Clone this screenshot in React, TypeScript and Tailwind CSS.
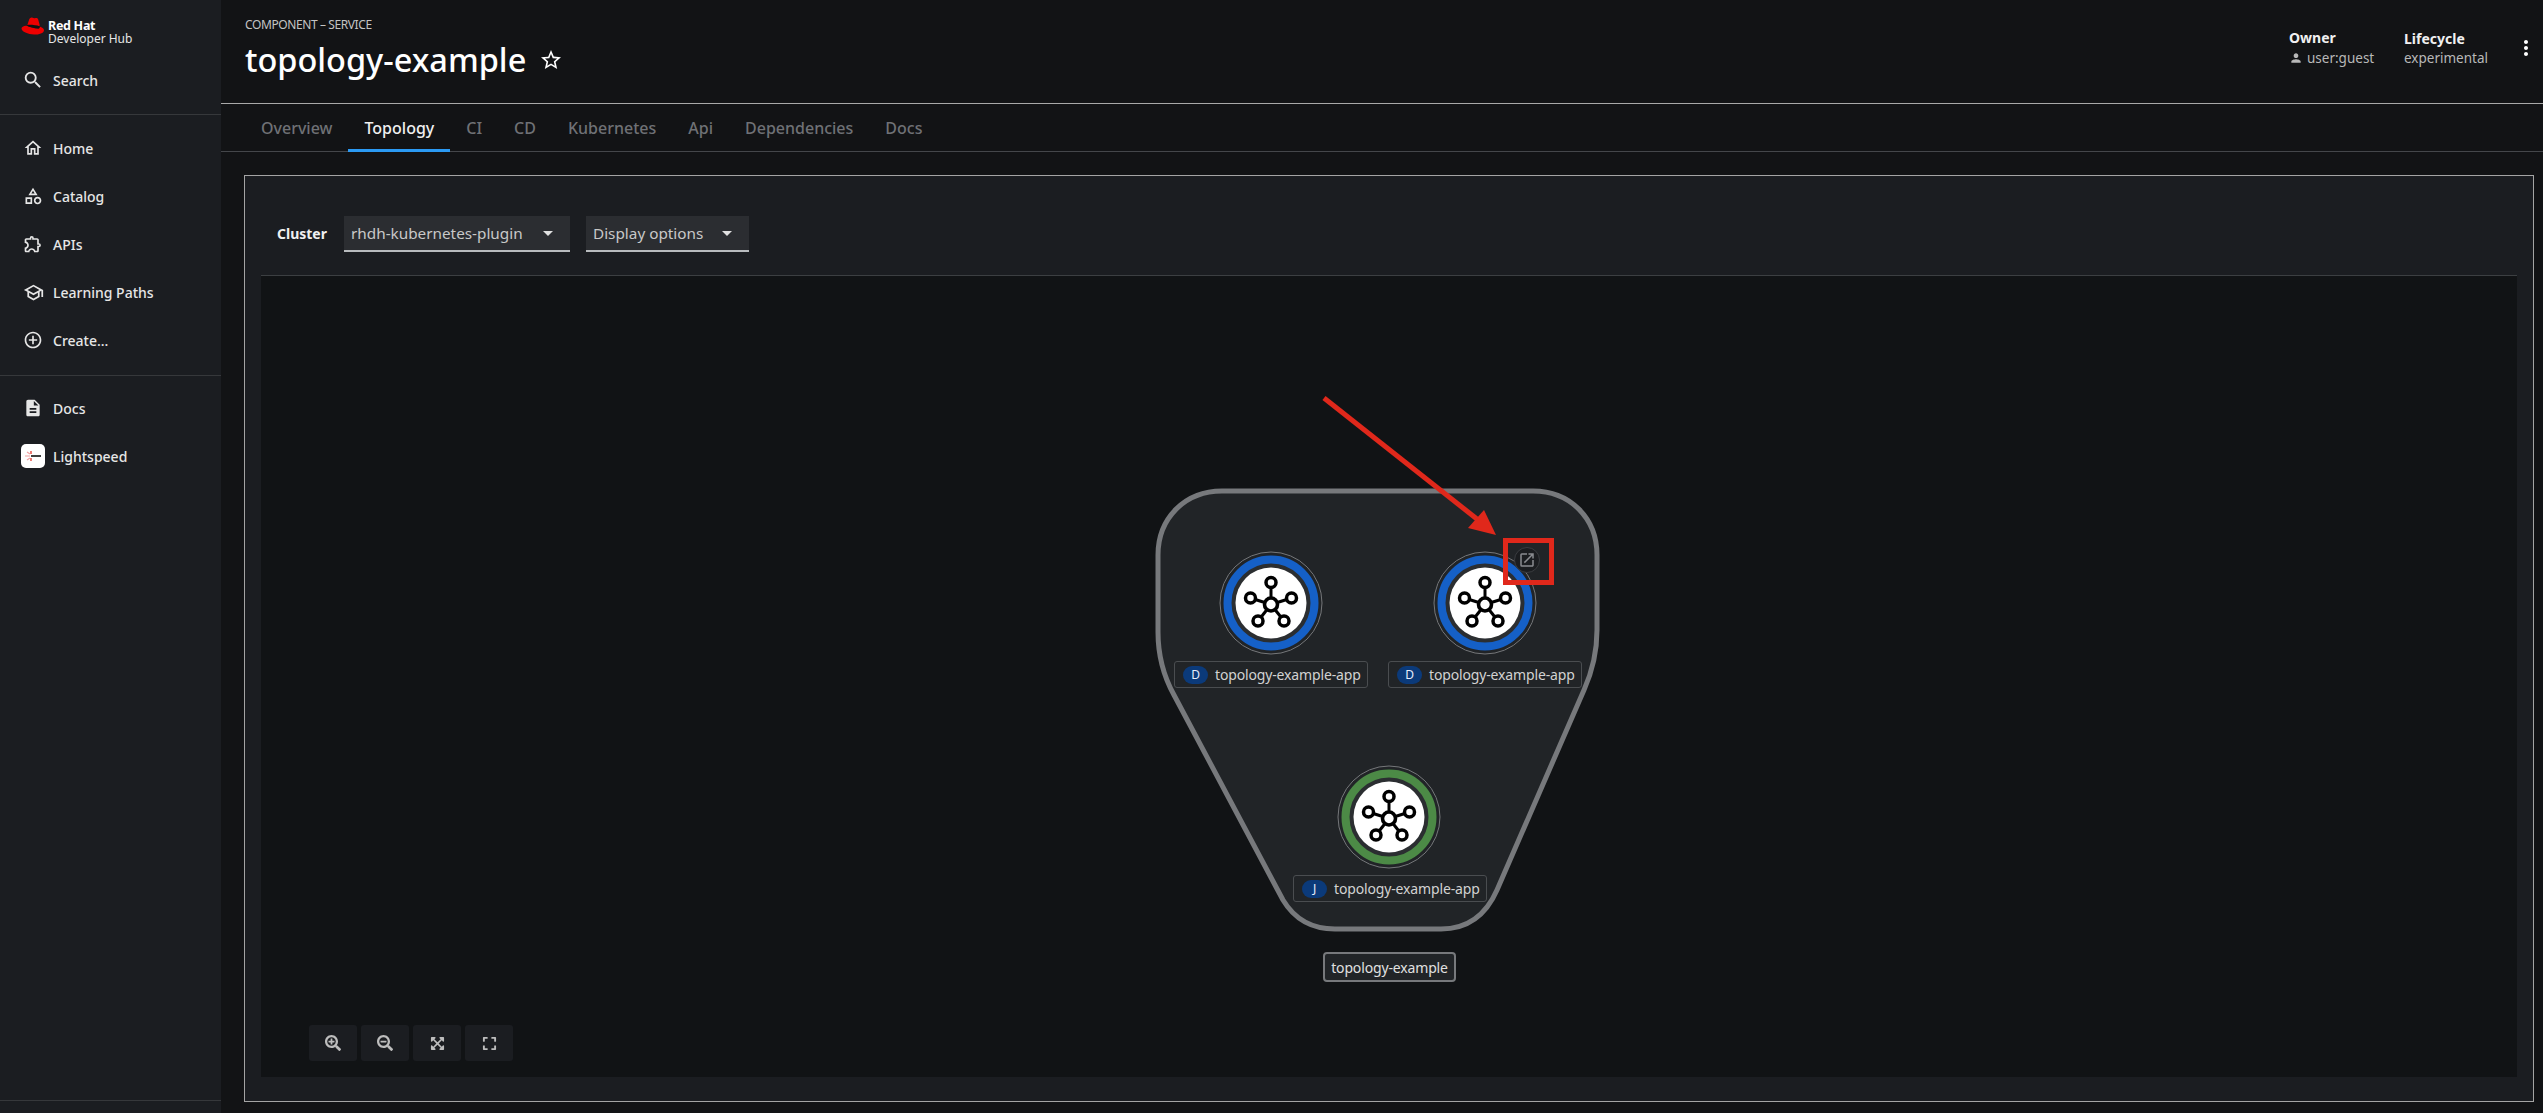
import React from 'react';
import {
  MdSearch,
  MdOutlineHome,
  MdOutlineCategory,
  MdOutlineExtension,
  MdOutlineSchool,
  MdAddCircleOutline,
  MdDescription,
  MdStarBorder,
  MdPerson,
  MdMoreVert,
  MdArrowDropDown,
  MdOutlineOpenInNew,
} from 'react-icons/md';
import { FaSearchPlus, FaSearchMinus, FaExpandArrowsAlt, FaExpand } from 'react-icons/fa';

const tabs = ['Overview', 'Topology', 'CI', 'CD', 'Kubernetes', 'Api', 'Dependencies', 'Docs'];

const NavItem: React.FC<{ icon: React.ReactNode; label: string }> = ({ icon, label }) => (
  <div className="flex h-12 items-center text-[14px] font-medium text-[#e6e6e6]">
    <div className="flex w-[53px] shrink-0 justify-center pl-[13px]">{icon}</div>
    <span>{label}</span>
  </div>
);

const LightspeedIcon = () => (
  <div className="flex h-6 w-6 items-center justify-center rounded-[5px] bg-white">
    <svg width="18" height="14" viewBox="0 0 18 14">
      <path d="M1 7h5M3 3l3 2M3 11l3-2" stroke="#f2a0a0" strokeWidth="1.2" />
      <path d="M7 2v3M7 9v3" stroke="#e0281b" strokeWidth="1.2" />
      <path d="M7 7h10" stroke="#111" strokeWidth="1.6" />
    </svg>
  </div>
);

const Sidebar = () => (
  <aside className="flex h-full w-[221px] shrink-0 flex-col bg-[#1b1d21]">
    <div className="flex h-[56px] items-start pl-[21px] pt-[16px]">
      <svg width="24" height="19" viewBox="0 0 24 19" className="mt-px">
        <path d="M6 9 8 3c.4-1.6 1.6-2.6 3-2.4 1 .2 2 .8 3 .6 1.2-.2 2.6-.4 3.2 1.2l1.4 5.4c.2 1 0 1.2-1 1.2-4 0-8-1-11.6 0z" fill="#e00" />
        <path d="M5 8.800C2.500 9 .5 10 .5 11.600 .5 14.500 7 17.600 13 17.600c5 0 10-1.400 10-4.400 0-1.800-2-3-4.400-3.800.2 1.600-.4 2-1.600 2-3.600 0-8.600-1.200-11.200-2.600z" fill="#e00" />
        <path d="M5.600 8.500c3 1.800 8.600 3 12 2.900.8-.1 1.200-.8 1-2.100-4-1.300-9-1.800-12.500-1.400z" fill="#111" />
      </svg>
      <div className="ml-[3px] mt-[3px] text-white">
        <div className="text-[12.500px] font-bold leading-[13px] tracking-[-0.3px]">Red Hat</div>
        <div className="text-[12px] leading-[14px] text-[#e6e6e6]">Developer Hub</div>
      </div>
    </div>
    <div className="h-[59px] border-b border-[#36383b] pt-0">
      <NavItem icon={<MdSearch size={22} />} label="Search" />
    </div>
    <div className="h-[261px] border-b border-[#36383b] pt-[9px]">
      <NavItem icon={<MdOutlineHome size={20} />} label="Home" />
      <NavItem icon={<MdOutlineCategory size={20} />} label="Catalog" />
      <NavItem icon={<MdOutlineExtension size={20} />} label="APIs" />
      <NavItem icon={<MdOutlineSchool size={21} />} label="Learning Paths" />
      <NavItem icon={<MdAddCircleOutline size={20} />} label="Create..." />
    </div>
    <div className="flex-1 pt-[8px]">
      <NavItem icon={<MdDescription size={20} />} label="Docs" />
      <NavItem icon={<LightspeedIcon />} label="Lightspeed" />
    </div>
    <div className="h-[13px] border-t border-[#36383b]" />
  </aside>
);

const Header = () => (
  <header className="flex h-[104px] shrink-0 items-start justify-between border-b border-[#a9a9a9] pl-[24px] pr-[5px]">
    <div>
      <div className="mt-[17px] text-[12px] leading-[16px] tracking-[-0.4px] text-[#c4c4c4]">COMPONENT – SERVICE</div>
      <div className="mt-[7px] flex items-center">
        <h1 className="text-[32.500px] font-medium leading-[40px] text-white">topology-example</h1>
        <MdStarBorder size={24} className="ml-[13px] text-white" />
      </div>
    </div>
    <div className="flex items-start">
      <div className="mt-[29px] w-[115px]">
        <div className="text-[14px] font-bold leading-[18px] text-[#f0f0f0]">Owner</div>
        <div className="mt-[1px] flex items-center text-[13.500px] leading-[20px] text-[#b8b8b8]">
          <MdPerson size={14} className="mr-[4px]" />
          user:guest
        </div>
      </div>
      <div className="mt-[30px] w-[110px]">
        <div className="text-[14px] font-bold leading-[18px] text-[#f0f0f0]">Lifecycle</div>
        <div className="text-[13.500px] leading-[20px] text-[#b8b8b8]">experimental</div>
      </div>
      <MdMoreVert size={24} className="mt-[36px] text-white" />
    </div>
  </header>
);

const Tabs = () => (
  <nav className="flex h-[48px] shrink-0 border-b border-[#44464a] pl-[24px]">
    {tabs.map((t) => (
      <div
        key={t}
        className={
          t === 'Topology'
            ? 'flex h-[48px] items-center border-b-[3px] border-[#2b9af3] px-[16px] pt-[3px] text-[16px] font-medium text-[#f0f0f0]'
            : 'flex h-[48px] items-center px-[16px] text-[16px] font-medium text-[#6f7175]'
        }
      >
        {t}
      </div>
    ))}
  </nav>
);

const Select: React.FC<{ label: string; w: string }> = ({ label, w }) => (
  <div className={`flex h-[36px] items-center justify-between border-b-2 border-[#b8bbbe] bg-[#2b2d31] pl-[7px] pr-[10px] text-[15.300px] text-[#c8c8c8] ${w}`}>
    <span>{label}</span>
    <MdArrowDropDown size={24} className="text-[#e0e0e0]" />
  </div>
);

const nodes = [
  { cx: 1271, cy: 603, color: '#1560c7' },
  { cx: 1485, cy: 603, color: '#1560c7' },
  { cx: 1389, cy: 817, color: '#4c8a46' },
];

const spokes = [
  [0, -22],
  [-20.5, -6.5],
  [20.5, -6.5],
  [-13, 16.5],
  [13, 16.5],
];

const TopologyNode: React.FC<{ cx: number; cy: number; color: string }> = ({ cx, cy, color }) => (
  <g>
    <circle cx={cx} cy={cy} r={51} fill="#212427" stroke="#75777a" strokeWidth={1} />
    <circle cx={cx} cy={cy} r={43.5} fill="#2b2e31" stroke={color} strokeWidth={8} />
    <circle cx={cx} cy={cy} r={35.5} fill="#fff" />
    {spokes.map(([dx, dy], i) => (
      <g key={i}>
        <line x1={cx} y1={cy + 1.5} x2={cx + dx} y2={cy + 1.5 + dy} stroke="#000" strokeWidth={3} />
        <circle cx={cx + dx} cy={cy + 1.5 + dy} r={5} fill="#fff" stroke="#000" strokeWidth={3.5} />
      </g>
    ))}
    <circle cx={cx} cy={cy + 1.5} r={6.5} fill="#fff" stroke="#000" strokeWidth={3.6} />
  </g>
);

const NodeLabel: React.FC<{ pos: string; badge: string }> = ({ pos, badge }) => (
  <div className={`absolute flex h-[27px] w-[194px] items-center rounded-[3px] border border-[#4a4d50] bg-[#212427] pl-[8px] text-[14px] tracking-[-0.15px] text-[#d2d2d2] ${pos}`}>
    <span className="mr-[7px] flex h-[18px] w-[25px] items-center justify-center rounded-full bg-[#0b3a7a] text-[12px] text-[#e8eefc]">
      {badge}
    </span>
    topology-example-app
  </div>
);

const zoomButtons = [
  <FaSearchPlus size={16} />,
  <FaSearchMinus size={16} />,
  <FaExpandArrowsAlt size={15} />,
  <FaExpand size={15} />,
];

const Canvas = () => (
  <div className="relative flex-1 bg-[#111315]">
    <svg className="absolute left-0 top-0" width="2256" height="801" viewBox="261 276 2256 801">
      <path
        d="M1222 491H1533C1570 491 1597 518 1597 555V630C1597 652 1592 672 1584 690L1497 890C1486 915 1468 929 1441 929H1335C1312 929 1295 920 1283 900L1174 695C1164 677 1158 655 1158 632V555C1158 518 1185 491 1222 491Z"
        fill="#212427"
        stroke="#77797c"
        strokeWidth={5}
      />
      {nodes.map((n) => (
        <TopologyNode key={n.cx} {...n} />
      ))}
    </svg>

    <NodeLabel pos="left-[913px] top-[385px]" badge="D" />
    <NodeLabel pos="left-[1127px] top-[385px]" badge="D" />
    <NodeLabel pos="left-[1032px] top-[599px]" badge="J" />
    <div className="absolute left-[1062px] top-[676px] flex h-[30px] w-[133px] items-center justify-center rounded-[4px] border-2 border-[#77797c] bg-[#212427] text-[14px] tracking-[-0.15px] text-[#e0e0e0]">
      topology-example
    </div>

    <div className="absolute left-[1253px] top-[271px] flex h-[26px] w-[26px] items-center justify-center rounded-full border border-[#3a3c40] bg-[#1b1d20] text-[#8a8c90]">
      <MdOutlineOpenInNew size={18} />
    </div>

    <svg className="absolute left-0 top-0" width="2256" height="801" viewBox="261 276 2256 801">
      <line x1="1324" y1="398" x2="1482" y2="523" stroke="#e0281b" strokeWidth={5} />
      <polygon points="1496,535 1484,510 1468,528" fill="#e0281b" />
      <rect x="1505.5" y="540.500" width="46" height="42" fill="none" stroke="#e0281b" strokeWidth={5} />
    </svg>

    <div className="absolute bottom-[16px] left-[48px] flex gap-[4px]">
      {zoomButtons.map((icon, i) => (
        <div key={i} className="flex h-[36px] w-[48px] items-center justify-center rounded-[3px] bg-[#1b1d21] text-[#bdbdbd]">
          {icon}
        </div>
      ))}
    </div>
  </div>
);

const App: React.FC = () => (
  <div className="flex h-screen w-full overflow-hidden bg-[#121315] font-['Noto_Sans',sans-serif]">
    <Sidebar />
    <main className="flex min-w-0 flex-1 flex-col">
      <Header />
      <Tabs />
      <section className="mb-[11px] ml-[23px] mr-[9px] mt-[23px] flex flex-1 flex-col border border-[#a4a4a4] bg-[#1b1d21] pb-[24px] pl-[16px] pr-[16px]">
        <div className="flex h-[100px] shrink-0 items-start border-b border-[#3c3f42] pt-[40px]">
          <span className="ml-[16px] mt-[7px] w-[67px] text-[14px] font-bold text-[#f0f0f0]">Cluster</span>
          <Select label="rhdh-kubernetes-plugin" w="w-[226px]" />
          <div className="w-[16px]" />
          <Select label="Display options" w="w-[163px]" />
        </div>
        <Canvas />
      </section>
    </main>
  </div>
);

export default App;
